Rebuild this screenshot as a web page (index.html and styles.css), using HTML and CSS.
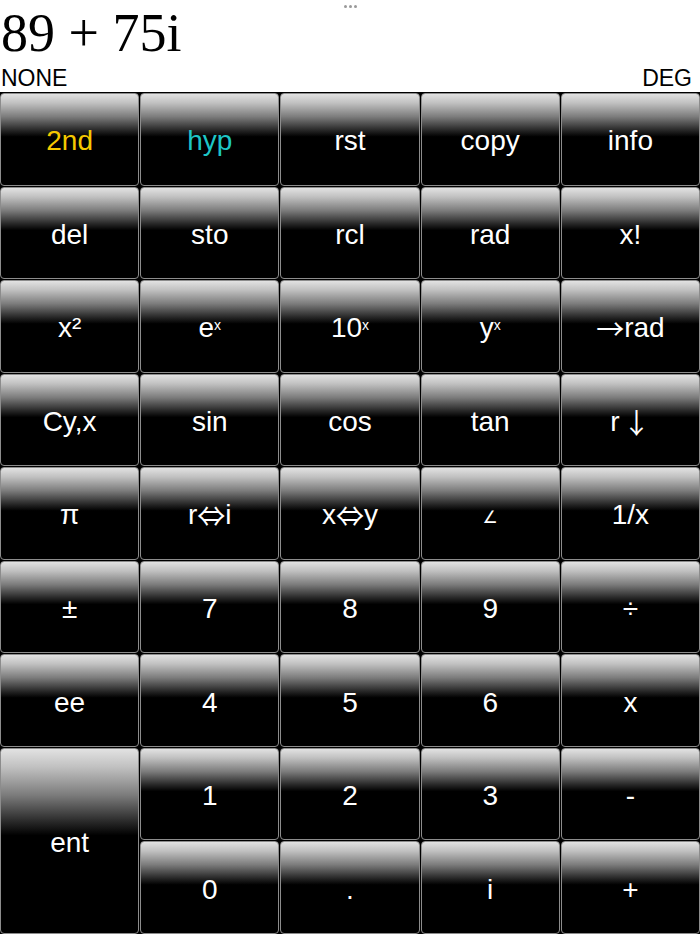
FILE: index.html
```html
<!DOCTYPE html>
<html>
<head>
<meta charset="utf-8">
<link rel="stylesheet" href="styles.css">
</head>
<body>
<div class="app">
  <header class="head">
    <div class="handle"><span></span><span></span><span></span></div>
    <div class="display">89 + 75i</div>
    <div class="status"><span>NONE</span><span>DEG</span></div>
  </header>
  <main class="keys">
    <div class="key gold">2nd</div>
    <div class="key teal">hyp</div>
    <div class="key">rst</div>
    <div class="key">copy</div>
    <div class="key">info</div>

    <div class="key">del</div>
    <div class="key">sto</div>
    <div class="key">rcl</div>
    <div class="key">rad</div>
    <div class="key">x!</div>

    <div class="key">x²</div>
    <div class="key">e<sup>x</sup></div>
    <div class="key">10<sup>x</sup></div>
    <div class="key">y<sup>x</sup></div>
    <div class="key"><span class="arrow">→</span>rad</div>

    <div class="key">Cy,x</div>
    <div class="key">sin</div>
    <div class="key">cos</div>
    <div class="key">tan</div>
    <div class="key">r<span class="arrow gap">↓</span></div>

    <div class="key">π</div>
    <div class="key">r<span class="arrow">⇔</span>i</div>
    <div class="key">x<span class="arrow">⇔</span>y</div>
    <div class="key"><span class="angle">∠</span></div>
    <div class="key">1/x</div>

    <div class="key">±</div>
    <div class="key">7</div>
    <div class="key">8</div>
    <div class="key">9</div>
    <div class="key">÷</div>

    <div class="key">ee</div>
    <div class="key">4</div>
    <div class="key">5</div>
    <div class="key">6</div>
    <div class="key">x</div>

    <div class="key tall">ent</div>
    <div class="key">1</div>
    <div class="key">2</div>
    <div class="key">3</div>
    <div class="key">-</div>

    <div class="key">0</div>
    <div class="key">.</div>
    <div class="key">i</div>
    <div class="key">+</div>
  </main>
</div>
</body>
</html>
```
FILE: styles.css
```css
html, body {
  margin: 0;
  padding: 0;
  background: #fff;
}
.app {
  width: 700px;
  height: 934px;
  display: flex;
  flex-direction: column;
  overflow: hidden;
}
.head {
  position: relative;
  height: 92px;
  box-sizing: border-box;
  padding: 5px 8px 0 1px;
  background: #fff;
}
.handle {
  position: absolute;
  top: 5px;
  left: 344px;
  display: flex;
  gap: 2px;
}
.handle span {
  width: 3px;
  height: 3px;
  border-radius: 50%;
  background: #9a9a9a;
}
.display {
  font-family: "Liberation Serif", "Times New Roman", serif;
  font-size: 54px;
  line-height: 56px;
  color: #000;
  white-space: nowrap;
}
.status {
  margin-top: 6px;
  display: flex;
  justify-content: space-between;
  font-family: "Liberation Sans", Arial, sans-serif;
  font-size: 23px;
  line-height: 23px;
  color: #000;
}
.keys {
  flex: 1;
  background: #000;
  padding-top: 1px;
  display: grid;
  grid-template-columns: repeat(5, 1fr);
  grid-template-rows: repeat(9, 1fr);
  gap: 1px;
}
.key {
  box-sizing: border-box;
  border: 1px solid #8c8c8c;
  border-radius: 4px;
  background: linear-gradient(to bottom, #e2e2e2 0%, #c0c0c0 10%, #7c7c7c 25%, #262626 40%, #000 47%, #000 100%);
  display: flex;
  align-items: center;
  justify-content: center;
  padding-top: 4px;
  color: #fff;
  font-family: "Liberation Sans", Arial, sans-serif;
  font-size: 28px;
  white-space: nowrap;
}
.key sup {
  font-size: 14px;
  line-height: 0;
  position: relative;
  top: -3px;
  vertical-align: super;
}
.arrow {
  font-family: "Noto Sans CJK JP", "DejaVu Sans", sans-serif;
  font-size: 28px;
  line-height: 1;
}
.gap {
  margin-left: 3px;
}
.tall {
  grid-row: span 2;
}
.gold {
  color: #f5c800;
}
.teal {
  color: #1ec6c6;
}
.angle {
  font-family: "DejaVu Sans", sans-serif;
  font-size: 17px;
  position: relative;
  top: 2px;
}
```
